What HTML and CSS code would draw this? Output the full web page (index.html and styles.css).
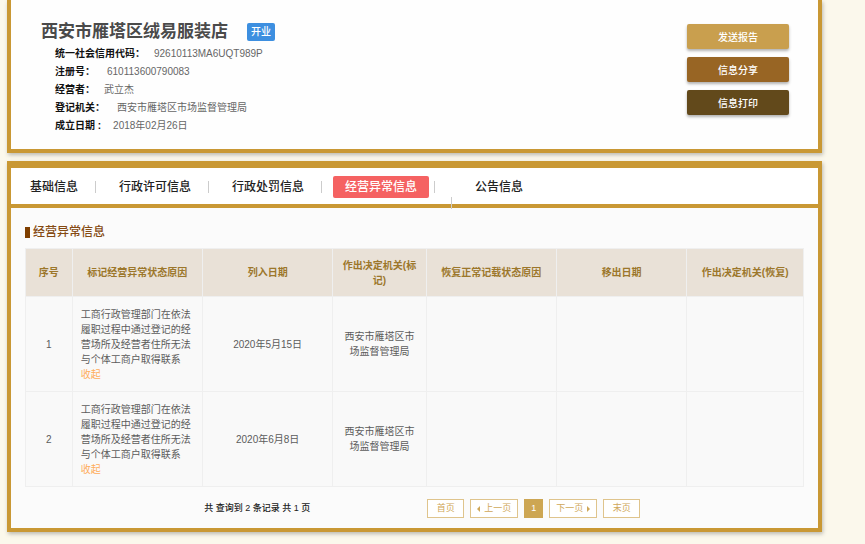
FILE: index.html
```html
<!DOCTYPE html>
<html lang="zh-CN">
<head>
  <meta charset="UTF-8" />
  <meta name="viewport" content="width=device-width, initial-scale=1.0"/>
  <title>西安市雁塔区绒易服装店</title>
  <link rel="stylesheet" href="styles.css">
</head>
<body>
  <main class="page">
    <section class="panel company">
      <div class="company-info">
        <div class="company-title">
          <h1>西安市雁塔区绒易服装店</h1>
          <span class="status">开业</span>
        </div>
        <dl class="fields">
          <div><dt>统一社会信用代码：</dt><dd>92610113MA6UQT989P</dd></div>
          <div class="wide"><dt>注册号：</dt><dd>610113600790083</dd></div>
          <div><dt>经营者：</dt><dd>武立杰</dd></div>
          <div class="wide"><dt>登记机关：</dt><dd>西安市雁塔区市场监督管理局</dd></div>
          <div class="wide"><dt>成立日期 :</dt><dd>2018年02月26日</dd></div>
        </dl>
      </div>
      <div class="actions">
        <button type="button" class="btn-send">发送报告</button>
        <button type="button" class="btn-share">信息分享</button>
        <button type="button" class="btn-print">信息打印</button>
      </div>
    </section>

    <section class="panel detail">
      <nav class="tabs">
        <a href="#">基础信息</a>
        <a href="#">行政许可信息</a>
        <a href="#">行政处罚信息</a>
        <a href="#" class="active">经营异常信息</a>
        <a href="#" class="notice">公告信息</a>
      </nav>

      <div class="content">
        <h2>经营异常信息</h2>
        <table>
          <colgroup>
            <col class="col-no">
            <col class="col-main">
            <col class="col-main">
            <col class="col-office">
            <col class="col-main">
            <col class="col-main">
            <col class="col-restore">
          </colgroup>
          <thead>
            <tr>
              <th>序号</th>
              <th>标记经营异常状态原因</th>
              <th>列入日期</th>
              <th>作出决定机关(标记)</th>
              <th>恢复正常记载状态原因</th>
              <th>移出日期</th>
              <th>作出决定机关(恢复)</th>
            </tr>
          </thead>
          <tbody>
            <tr>
              <td>1</td>
              <td class="reason">工商行政管理部门在依法履职过程中通过登记的经营场所及经营者住所无法与个体工商户取得联系 <a href="#">收起</a></td>
              <td>2020年5月15日</td>
              <td>西安市雁塔区市场监督管理局</td>
              <td></td>
              <td></td>
              <td></td>
            </tr>
            <tr>
              <td>2</td>
              <td class="reason">工商行政管理部门在依法履职过程中通过登记的经营场所及经营者住所无法与个体工商户取得联系 <a href="#">收起</a></td>
              <td>2020年6月8日</td>
              <td>西安市雁塔区市场监督管理局</td>
              <td></td>
              <td></td>
              <td></td>
            </tr>
          </tbody>
        </table>

        <div class="table-footer">
          <p>共 查询到 2 条记录 共 1 页</p>
          <div class="pagination">
            <a href="#" class="edge">首页</a>
            <a href="#" class="prev">上一页</a>
            <a href="#" class="current">1</a>
            <a href="#" class="next">下一页</a>
            <a href="#" class="edge">末页</a>
          </div>
        </div>
      </div>
    </section>
  </main>
</body>
</html>
```
FILE: styles.css
```css
* {
  box-sizing: border-box;
}

body {
  margin: 0;
  font-family: "Liberation Sans", "Noto Sans CJK SC", sans-serif;
  font-size: 10px;
  line-height: 15px;
  color: #5c5c5c;
  background-color: #fbf8ec;
}

h1, h2, p, dl, dd {
  margin: 0;
}

a {
  text-decoration: none;
}

.page {
  padding: 0 43px 12px 7px;
}

.panel {
  border: 4px solid #c99834;
  box-shadow: 1px 2px 4px rgba(0, 0, 0, 0.25);
}

/* company header */
.company {
  display: flex;
  justify-content: space-between;
  align-items: flex-start;
  border-top: 0;
  padding: 19px 29px 14px 30px;
  background-color: #fefefe;
}

.company-title {
  display: flex;
  align-items: center;
  gap: 19px;
  height: 26px;
}

.company-title h1 {
  font-size: 17px;
  line-height: 24px;
  font-weight: 600;
  color: #4a4a4a;
}

.status {
  padding: 0 4px;
  border-radius: 2px;
  font-size: 10px;
  line-height: 18px;
  font-weight: 500;
  color: #fff;
  background-color: #3d8fe0;
}

.fields {
  padding-left: 14px;
}

.fields div {
  display: flex;
  gap: 9px;
  line-height: 18px;
}

.fields .wide {
  gap: 12px;
}

.fields dt {
  font-weight: bold;
  color: #111;
}

.fields dd {
  color: #666;
}

.actions {
  display: flex;
  flex-direction: column;
  gap: 8px;
  padding-top: 5px;
}

.actions button {
  width: 102px;
  height: 25px;
  padding: 0;
  border: 0;
  border-radius: 2px;
  font-family: inherit;
  font-size: 10px;
  font-weight: 500;
  color: #fff;
  box-shadow: 0 2px 3px rgba(0, 0, 0, 0.3);
  cursor: pointer;
}

.actions .btn-send {
  background-color: #c99f4e;
}

.actions .btn-share {
  background-color: #986524;
}

.actions .btn-print {
  background-color: #62491b;
}

/* tabs */
.detail {
  margin-top: 8px;
  border-top-width: 7px;
  background-color: #fbfbfb;
}

.tabs {
  display: flex;
  align-items: center;
  height: 40px;
  padding: 2px 7px 0;
  border-bottom: 4px solid #c99834;
  background-color: #fff;
}

.tabs a {
  position: relative;
  margin-right: 17px;
  padding: 0 12px;
  border-radius: 2px;
  font-size: 12px;
  line-height: 22px;
  font-weight: 500;
  color: #222;
}

.tabs a.active {
  color: #fff;
  background-color: #f56262;
}

.tabs a::after {
  content: "";
  position: absolute;
  top: 5px;
  right: -6px;
  width: 1px;
  height: 12px;
  background-color: #ccc;
}

.tabs .notice {
  margin-left: 17px;
}

.tabs .notice::after {
  top: 21px;
  right: auto;
  left: -12px;
}

/* abnormal records */
.content {
  padding: 17px 14px 10px;
}

.content h2 {
  display: flex;
  align-items: center;
  gap: 3px;
  margin-bottom: 8px;
  font-size: 12px;
  line-height: 15px;
  font-weight: 500;
  color: #854a12;
}

.content h2::before {
  content: "";
  width: 5px;
  height: 11px;
  background-color: #7f3f00;
}

table {
  width: 100%;
  table-layout: fixed;
  border-collapse: collapse;
  background-color: #f9f9f9;
}

.col-no {
  width: 6%;
}

.col-main {
  width: 16.75%;
}

.col-office {
  width: 12%;
}

.col-restore {
  width: 15%;
}

th, td {
  padding: 8px;
  border: 1px solid #efefef;
  text-align: center;
}

th {
  height: 48px;
  font-weight: bold;
  color: #9c772b;
  background-color: #e9e1d7;
}

td {
  height: 95px;
}

.reason {
  text-align: left;
}

.reason a {
  display: block;
  color: #ffac59;
}

.table-footer {
  display: grid;
  grid-template-columns: 223px 1fr;
  align-items: center;
  padding: 12px 0 0 23%;
  font-size: 9px;
}

.table-footer p {
  font-weight: 500;
  color: #222;
}

.pagination {
  display: flex;
  gap: 6px;
}

.pagination a {
  display: flex;
  align-items: center;
  justify-content: center;
  gap: 4px;
  height: 19px;
  padding: 0 6px;
  border: 1px solid #dfc48c;
  color: #cfa759;
  background-color: #fff;
}

.pagination .edge {
  min-width: 37px;
}

.pagination .current {
  border-color: #cda653;
  color: #fff;
  background-color: #cda653;
}

.pagination .prev::before,
.pagination .next::after {
  content: "";
  border: 3px solid transparent;
}

.pagination .prev::before {
  border-left: 0;
  border-right-color: #cfa759;
}

.pagination .next::after {
  border-right: 0;
  border-left-color: #cfa759;
}
```
